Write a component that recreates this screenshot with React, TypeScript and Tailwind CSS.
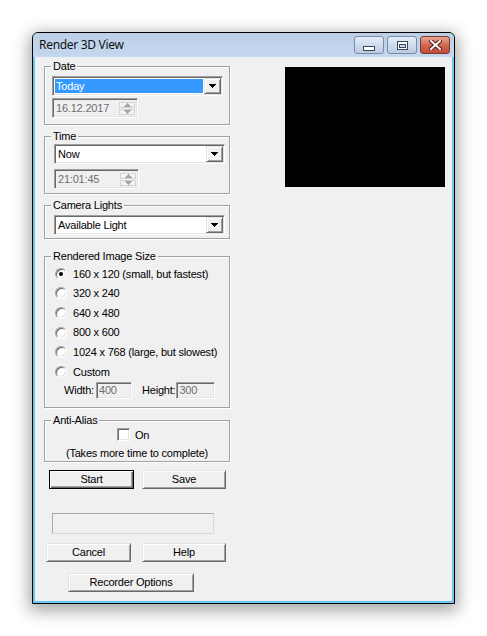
import type { ReactNode } from 'react';

const sunken =
  'border border-t-[#a0a0a0] border-l-[#a0a0a0] border-r-white border-b-white shadow-[inset_1px_1px_0_#696969,inset_-1px_-1px_0_#e3e3e3]';
const raised =
  'border border-t-[#e3e3e3] border-l-[#e3e3e3] border-r-[#696969] border-b-[#696969] shadow-[inset_1px_1px_0_#fff,inset_-1px_-1px_0_#a0a0a0] bg-[#f0f0f0]';

function Arrow({ up = false, color = '#000' }: { up?: boolean; color?: string }) {
  const rows = up ? [3, 2, 1, 0] : [0, 1, 2, 3];
  return (
    <svg width="7" height="4" viewBox="0 0 7 4" shapeRendering="crispEdges">
      {rows.map((r, i) => (
        <rect key={i} x={r} y={i} width={7 - r * 2} height="1" fill={color} />
      ))}
    </svg>
  );
}

function Group({ label, className = '', children }: { label: string; className?: string; children: ReactNode }) {
  return (
    <fieldset
      className={`border border-[#a0a0a0] shadow-[inset_1px_1px_0_#fff,1px_1px_0_#fff] ${className}`}
    >
      <legend className="ml-[6px] px-[2px] h-[13px] leading-[13px] bg-[#f0f0f0]">{label}</legend>
      {children}
    </fieldset>
  );
}

function Combo({ value, selected = false, className = '' }: { value: string; selected?: boolean; className?: string }) {
  return (
    <div className={`flex h-[20px] bg-white p-[1px] ${sunken} ${className}`}>
      <div className="flex flex-1 p-[1px]">
        <div
          className={`flex flex-1 items-center pl-[1px] ${selected ? 'bg-[#3399ff] text-white' : 'text-black'}`}
        >
          {value}
        </div>
      </div>
      <div className={`flex w-[17px] items-center justify-center ${raised}`}>
        <Arrow />
      </div>
    </div>
  );
}

function SpinField({ value, className = '' }: { value: string; className?: string }) {
  return (
    <div className={`flex h-[20px] bg-[#f0f0f0] p-[1px] ${sunken} ${className}`}>
      <div className="flex flex-1 items-center pl-[2px] text-[#6d6d6d]">{value}</div>
      <div className="flex w-[17px] flex-col gap-[1px] py-[2px] pr-[1px]">
        <div className="flex flex-1 items-center justify-center border border-[#d2d2d2] bg-[#f4f4f4]">
          <Arrow up color="#a8a8a8" />
        </div>
        <div className="flex flex-1 items-center justify-center border border-[#d2d2d2] bg-[#f4f4f4]">
          <Arrow color="#a8a8a8" />
        </div>
      </div>
    </div>
  );
}

function Radio({ label, checked = false }: { label: string; checked?: boolean }) {
  return (
    <div className="flex h-[19.6px] items-center pl-[10px]">
      <div className="flex h-[12px] w-[12px] items-center justify-center rounded-full border border-[#a0a0a0] border-r-white border-b-white bg-white shadow-[inset_1px_1px_0_#696969,inset_-1px_-1px_0_#e3e3e3]">
        {checked && <div className="h-[4px] w-[4px] rounded-full bg-black" />}
      </div>
      <span className="ml-[6px]">{label}</span>
    </div>
  );
}

function Button({ label, className = '', isDefault = false }: { label: string; className?: string; isDefault?: boolean }) {
  if (isDefault) {
    return (
      <div
        className={`flex h-[19px] items-center justify-center border border-black bg-[#f0f0f0] shadow-[inset_1px_1px_0_#fff,inset_-1px_-1px_0_#696969,inset_-2px_-2px_0_#a0a0a0] ${className}`}
      >
        {label}
      </div>
    );
  }
  return <div className={`flex h-[19px] items-center justify-center ${raised} ${className}`}>{label}</div>;
}

function DisabledInput({ value, className = '' }: { value: string; className?: string }) {
  return (
    <div className={`flex h-[17px] items-center bg-[#f0f0f0] pl-[2px] text-[#6d6d6d] ${sunken} ${className}`}>
      {value}
    </div>
  );
}

function CaptionButton({ kind }: { kind: 'min' | 'max' | 'close' }) {
  const isClose = kind === 'close';
  return (
    <div
      className={`flex h-[18px] w-[30px] items-center justify-center rounded-[3px] border ${
        isClose
          ? 'border-[#7a3a30] bg-linear-to-b from-[#e8a493] via-[#d06a52] to-[#c04c36]'
          : 'border-[#7c8ba3] bg-linear-to-b from-[#e6eef8] via-[#cfdcee] to-[#b8cbe3]'
      }`}
    >
      {kind === 'min' && (
        <svg width="12" height="5" viewBox="0 0 12 5" className="mt-[7px]">
          <rect x="0.5" y="0.5" width="11" height="4" fill="#fff" stroke="#38455a" />
        </svg>
      )}
      {kind === 'max' && (
        <svg width="11" height="9" viewBox="0 0 11 9">
          <rect x="0.5" y="0.5" width="10" height="8" fill="#fff" stroke="#38455a" />
          <rect x="2.5" y="3.5" width="6" height="3" fill="#c8d6e8" stroke="#38455a" />
        </svg>
      )}
      {isClose && (
        <svg width="13" height="10" viewBox="0 0 13 10">
          <path
            d="M2 1 L11 9 M11 1 L2 9"
            stroke="#5a1d14"
            strokeWidth="4"
            strokeLinecap="square"
          />
          <path d="M2 1 L11 9 M11 1 L2 9" stroke="#fff" strokeWidth="2" strokeLinecap="square" />
        </svg>
      )}
    </div>
  );
}

export default function App() {
  return (
    <div className="h-[636px] w-[487px] bg-white pl-[32px] pt-[32px] font-['Liberation_Sans',Arial,sans-serif] text-[11px] tracking-[-0.2px] text-black">
      <div className="flex h-[572px] w-[423px] flex-col rounded-t-[6px] border border-black bg-[#6ac8ef] shadow-[0_4px_16px_3px_rgba(0,0,0,0.35)]">
        {/* Title bar */}
        <div className="flex h-[24px] items-start rounded-t-[5px] bg-linear-to-b from-[#bccfe6] to-[#c3d8f0]">
          <span className="ml-[6px] mt-[3px] font-['Noto_Sans',sans-serif] text-[12px] tracking-[-0.3px] text-[#111]">
            Render 3D View
          </span>
          <div className="ml-auto mr-[4px] mt-[3px] flex gap-[3px]">
            <CaptionButton kind="min" />
            <CaptionButton kind="max" />
            <CaptionButton kind="close" />
          </div>
        </div>

        {/* Client area */}
        <div className="mx-[2px] mb-[2px] flex flex-1 bg-[#f0f0f0]">
          <div className="ml-[9px] flex w-[186px] flex-col">
            <Group label="Date" className="mt-[3px]">
              <div className="flex flex-col gap-[2px] pb-[6px] pl-[7px] pt-[3px]">
                <Combo value="Today" selected className="w-[171px]" />
                <SpinField value="16.12.2017" className="w-[86px]" />
              </div>
            </Group>

            <Group label="Time" className="mt-[5px]">
              <div className="flex flex-col gap-[5px] pb-[4px] pl-[9px] pt-[1px]">
                <Combo value="Now" className="w-[171px]" />
                <SpinField value="21:01:45" className="w-[85px]" />
              </div>
            </Group>

            <Group label="Camera Lights" className="mt-[5px]">
              <div className="pb-[3px] pl-[9px] pt-[3px]">
                <Combo value="Available Light" className="w-[171px]" />
              </div>
            </Group>

            <Group label="Rendered Image Size" className="mt-[11px]">
              <div className="flex flex-col pb-[8px] pt-[1px]">
                <Radio label="160 x 120 (small, but fastest)" checked />
                <Radio label="320 x 240" />
                <Radio label="640 x 480" />
                <Radio label="800 x 600" />
                <Radio label="1024 x 768 (large, but slowest)" />
                <Radio label="Custom" />
                <div className="flex items-center pl-[19px]">
                  <span>Width:</span>
                  <DisabledInput value="400" className="ml-[2px] w-[36px]" />
                  <span className="ml-[10px]">Height:</span>
                  <DisabledInput value="300" className="ml-[1px] w-[39px]" />
                </div>
              </div>
            </Group>

            <Group label="Anti-Alias" className="mt-[6px]">
              <div className="flex flex-col pb-[1px]">
                <div className="flex items-center pl-[72px]">
                  <div className={`h-[13px] w-[13px] bg-white ${sunken}`} />
                  <span className="ml-[5px]">On</span>
                </div>
                <div className="mt-[4px] h-[13px] text-center leading-[13px]">(Takes more time to complete)</div>
              </div>
            </Group>

            <div className="mt-[8px] flex">
              <Button label="Start" isDefault className="ml-[5px] w-[85px]" />
              <Button label="Save" className="ml-[8px] w-[84px]" />
            </div>

            <div className="ml-[8px] mt-[24px] h-[21px] w-[162px] border border-[#a9a9a9] border-b-[#d8d8d8] border-r-[#d8d8d8]" />

            <div className="mt-[9px] flex">
              <Button label="Cancel" className="ml-[2px] w-[85px]" />
              <Button label="Help" className="ml-[11px] w-[84px]" />
            </div>

            <div className="mt-[11px] flex">
              <Button label="Recorder Options" className="ml-[24px] w-[126px]" />
            </div>
          </div>

          <div className="ml-[55px] mt-[10px] h-[120px] w-[160px] bg-black" />
        </div>
      </div>
    </div>
  );
}
